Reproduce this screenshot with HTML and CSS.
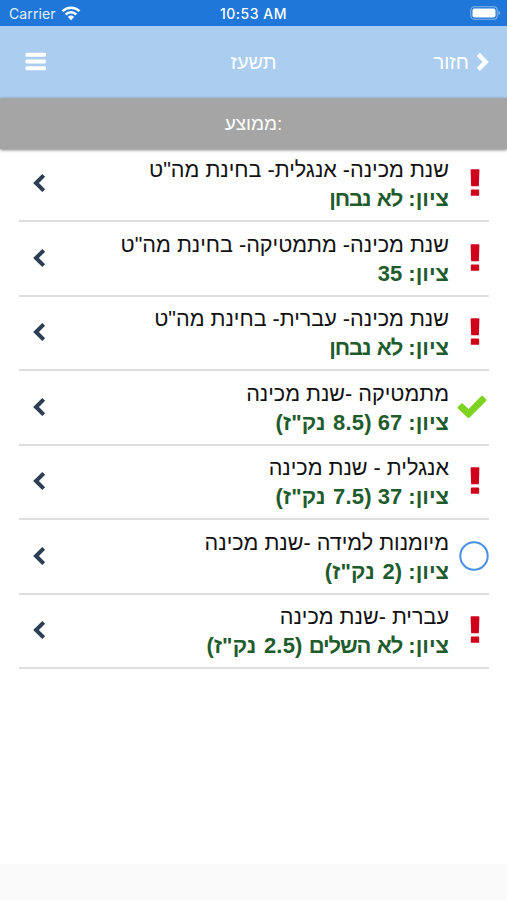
FILE: index.html
```html
<!DOCTYPE html>
<html lang="he">
<head>
<meta charset="utf-8">
<title>תשעז</title>
<link rel="stylesheet" href="styles.css">
</head>
<body>
<svg class="defs" width="0" height="0" aria-hidden="true">
  <symbol id="bang" viewBox="0 0 10 28"><path fill="#d0021b" d="M1.500.300h7q1 0 .9 1L8.900 16.400q-.1.900-1 .9H2.100q-.9 0-1-.9L.6 1.300Q.500.300 1.500.300zM1.700 20.600h6.600q.9 0 .9.900v4.400q0 .9-.9.900H1.700q-.9 0-.9-.9v-4.400q0-.9.900-.9z"/></symbol>
  <symbol id="check" viewBox="0 0 30 24"><path fill="#7ed321" d="M.9 11.900 4.200 8.500q.8-.7 1.600 0L11.500 14 24.300 1.100q.8-.7 1.600 0L29.100 4.300q.8.8 0 1.600L12.400 22.700q-.9.800-1.700 0L.9 13.500q-.8-.8 0-1.600z"/></symbol>
  <symbol id="ring" viewBox="0 0 30 30"><circle cx="15" cy="15" r="13.700" fill="none" stroke="#4a90e2" stroke-width="2"/></symbol>
  <symbol id="chev" viewBox="0 0 14 20"><path fill="none" stroke="#2c3e55" stroke-width="4" stroke-linejoin="miter" d="M11.700 2.300 4 10l7.700 7.700"/></symbol>
</svg>
<header class="status">
  <div class="carrier"><span>Carrier</span>
    <svg width="20" height="16" viewBox="0 0 20 16"><g fill="none" stroke="#fff" stroke-width="2.500"><path d="M1.500 6.200a12.200 12.200 0 0 1 17 0"/><path d="M4.700 9.500a7.600 7.600 0 0 1 10.600 0"/></g><path fill="#fff" d="M10 15.200 6.900 11.900a4.400 4.400 0 0 1 6.200 0z"/></svg>
  </div>
  <div class="clock">10:53 AM</div>
  <svg class="battery" width="31" height="14" viewBox="0 0 31 14"><rect x=".8" y=".8" width="26.400" height="12.400" rx="3.500" fill="none" stroke="#83b5eb" stroke-width="1.100"/><rect x="2.500" y="2.500" width="23" height="9" rx="2" fill="#fff"/><path fill="#83b5eb" d="M28.500 4.800q1.800.7 1.800 2.200t-1.800 2.200z"/></svg>
</header>
<nav class="nav">
  <svg class="menu" width="22" height="20" viewBox="0 0 22 20"><g fill="#fff"><rect x=".5" y=".8" width="20.500" height="4" rx="1.300"/><rect x=".5" y="7.500" width="20.500" height="4" rx="1.300"/><rect x=".5" y="14.200" width="20.500" height="4" rx="1.300"/></g></svg>
  <h1 class="title">תשעז</h1>
  <div class="back"><span>חזור</span>
    <svg width="14" height="20" viewBox="0 0 14 20"><path fill="none" stroke="#fff" stroke-width="4.400" d="M2.300 2.400 9.700 9.900l-7.400 7.500"/></svg>
  </div>
</nav>
<div class="average">ממוצע:</div>
<main class="list" dir="rtl">
  <div class="row">
    <svg class="mark bang"><use href="#bang"/></svg>
    <div class="text"><div class="name">שנת מכינה- אנגלית- בחינת מה"ט</div><div class="grade">ציון: <span class="result">לא נבחן</span></div></div>
    <svg class="chev"><use href="#chev"/></svg>
  </div>
  <div class="row">
    <svg class="mark bang"><use href="#bang"/></svg>
    <div class="text"><div class="name">שנת מכינה- מתמטיקה- בחינת מה"ט</div><div class="grade">ציון: 35</div></div>
    <svg class="chev"><use href="#chev"/></svg>
  </div>
  <div class="row">
    <svg class="mark bang"><use href="#bang"/></svg>
    <div class="text"><div class="name">שנת מכינה- עברית- בחינת מה"ט</div><div class="grade">ציון: <span class="result">לא נבחן</span></div></div>
    <svg class="chev"><use href="#chev"/></svg>
  </div>
  <div class="row">
    <svg class="mark check"><use href="#check"/></svg>
    <div class="text"><div class="name">מתמטיקה -שנת מכינה</div><div class="grade">ציון: 67 <span class="credits">(8.5 נק"ז)</span></div></div>
    <svg class="chev"><use href="#chev"/></svg>
  </div>
  <div class="row">
    <svg class="mark bang"><use href="#bang"/></svg>
    <div class="text"><div class="name">אנגלית - שנת מכינה</div><div class="grade">ציון: 37 <span class="credits">(7.5 נק"ז)</span></div></div>
    <svg class="chev"><use href="#chev"/></svg>
  </div>
  <div class="row">
    <svg class="mark ring"><use href="#ring"/></svg>
    <div class="text"><div class="name">מיומנות למידה -שנת מכינה</div><div class="grade">ציון: <span class="credits">(2 נק"ז)</span></div></div>
    <svg class="chev"><use href="#chev"/></svg>
  </div>
  <div class="row">
    <svg class="mark bang"><use href="#bang"/></svg>
    <div class="text"><div class="name">עברית -שנת מכינה</div><div class="grade">ציון: <span class="result">לא השלים</span> <span class="credits">(2.5 נק"ז)</span></div></div>
    <svg class="chev"><use href="#chev"/></svg>
  </div>
</main>
<footer class="footer"></footer>
</body>
</html>
```
FILE: styles.css
```css
* { box-sizing: border-box; }
body {
  margin: 0;
  height: 900px;
  display: flex;
  flex-direction: column;
  background: #fff;
  font-family: "Liberation Sans", Arial, sans-serif;
  overflow: hidden;
}
.defs { display: none; }
svg { display: block; flex: none; }
.status {
  height: 26px;
  flex: none;
  display: grid;
  grid-template-columns: 1fr auto 1fr;
  align-items: center;
  padding: 1px 6px 0 9px;
  background: #1f78d9;
  color: #fff;
  font: 14px/20px Inter, sans-serif;
}
.carrier { display: flex; align-items: center; gap: 5px; color: #e4effb; letter-spacing: .1px; }
.carrier svg { margin-top: -2px; }
.clock { font-weight: 500; font-size: 14px; letter-spacing: .5px; margin-left: -3px; }
.battery { justify-self: end; margin-top: -1px; }
.nav {
  height: 72px;
  flex: none;
  display: grid;
  grid-template-columns: 1fr auto 1fr;
  align-items: center;
  padding: 0 17px;
  background: #abcdf0;
  color: #fff;
  font-size: 20px;
}
.menu { margin: -1px 0 0 8px; }
.title { margin: 0; font-size: 20px; font-weight: 400; line-height: 24px; }
.back { display: flex; justify-content: flex-end; align-items: center; gap: 7px; line-height: 24px; }
.back svg { margin-top: -1px; }
.average {
  position: relative;
  height: 51px;
  flex: none;
  background: #a5a5a5;
  box-shadow: 0 1px 3px rgba(0, 0, 0, .5);
  color: #fff;
  font-size: 19px;
  line-height: 52px;
  text-align: center;
}
.list { flex: none; padding: 0 18px 0 19px; margin-top: -1.500px; }
.row {
  height: 74.5px;
  display: flex;
  align-items: center;
  border-bottom: 2px solid #dedede;
}
.text { flex: 1; padding-top: 1px; }
.name, .grade { height: 29px; line-height: 29px; font-size: 22px; white-space: nowrap; }
.name { color: #111; font-size: 21.6px; }
.grade { color: #1f5c2d; font-weight: 700; }
.result { letter-spacing: -1.1px; word-spacing: 1.5px; }
.credits { letter-spacing: .15px; word-spacing: 1.3px; }
.mark { position: relative; top: -.5px; }
.mark.bang { width: 10px; height: 28px; margin: 0 9px 0 21px; }
.mark.check { width: 30px; height: 24px; margin: 1px 2px 0 8px; }
.mark.ring { width: 30px; height: 30px; margin: 0 0 0 10px; }
.chev { width: 14px; height: 20px; margin: -1px 0 0 13px; }
.footer { margin-top: auto; height: 36px; flex: none; background: #f9f9f9; }
```
